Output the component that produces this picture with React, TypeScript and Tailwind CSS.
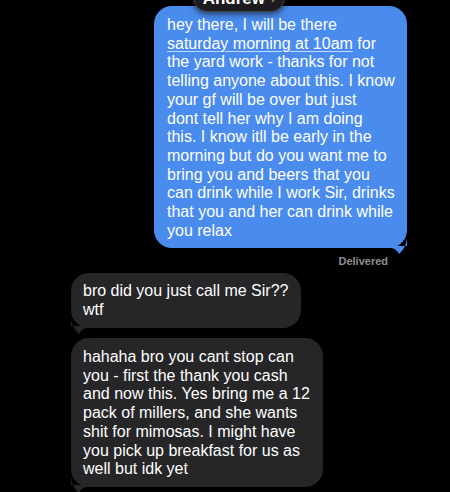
const font = { fontFamily: '"Liberation Sans", Arial, sans-serif' };

const Tail = ({ side, color }: { side: "left" | "right"; color: string }) => (
    <svg
        width="20"
        height="20"
        viewBox="0 0 20 20"
        className={side === "right" ? "absolute right-0 bottom-[-8px]" : "absolute left-0 bottom-[-8px] -scale-x-100"}
    >
        <path d="M0 10 L20 10 L20 0 C20 6 18 13 12 18 C10 14 6 11 0 12 Z" fill={color} />
    </svg>
);

const lines = (text: string[]) =>
    text.map((t, i) => (
        <span key={i} className="block whitespace-nowrap">
            {t}
        </span>
    ));

export default function App() {
    return (
        <div className="relative w-[450px] h-[492px] bg-black overflow-hidden flex flex-col" style={font}>
            {/* contact pill */}
            <div className="absolute left-[193px] top-[-16px] z-10 w-[92px] h-[28px] rounded-full bg-[#1c1c1e] border border-[#48484a] flex items-center justify-center gap-[6px] shadow-[0_2px_6px_rgba(0,0,0,0.6)]">
                <span className="text-white font-bold text-[17px] leading-none">Andrew</span>
                <span className="text-[#8e8e93] font-bold text-[13px] leading-none">›</span>
            </div>

            {/* outgoing */}
            <div className="self-end mr-[43px] mt-[6px] relative">
                <div className="relative z-[1] w-[253px] h-[242px] rounded-[18px] bg-[#4a8cee] pl-[13px] pt-[10px] text-white text-[16px] leading-[18.7px]">
                    <span className="block whitespace-nowrap">hey there, I will be there</span>
                    <span className="block whitespace-nowrap">
                        <span className="underline decoration-[#c4d9fa] decoration-1 underline-offset-2">saturday morning at 10am</span> for
                    </span>
                    {lines([
                        "the yard work - thanks for not",
                        "telling anyone about this. I know",
                        "your gf will be over but just",
                        "dont tell her why I am doing",
                        "this. I know itll be early in the",
                        "morning but do you want me to",
                        "bring you and beers that you",
                        "can drink while I work Sir, drinks",
                        "that you and her can drink while",
                        "you relax",
                    ])}
                </div>
                <Tail side="right" color="#4a8cee" />
            </div>
            <div className="self-end mr-[62px] mt-[7px] text-[11px] font-bold text-[#8e8e93] leading-[13px]">Delivered</div>

            {/* incoming */}
            <div className="ml-[71px] mt-[5px] relative self-start">
                <div className="relative z-[1] w-[230px] h-[55px] rounded-[18px] bg-[#262628] pl-[12px] pt-[9px] text-white text-[16px] leading-[18.7px]">
                    {lines(["bro did you just call me Sir??", "wtf"])}
                </div>
                <Tail side="left" color="#262628" />
            </div>

            <div className="ml-[71px] mt-[10px] relative self-start">
                <div className="relative z-[1] w-[252px] h-[149px] rounded-[18px] bg-[#262628] pl-[12px] pt-[10px] text-white text-[16px] leading-[18.7px]">
                    {lines([
                        "hahaha bro you cant stop can",
                        "you - first the thank you cash",
                        "and now this. Yes bring me a 12",
                        "pack of millers, and she wants",
                        "shit for mimosas. I might have",
                        "you pick up breakfast for us as",
                        "well but idk yet",
                    ])}
                </div>
                <Tail side="left" color="#262628" />
            </div>
        </div>
    );
}
